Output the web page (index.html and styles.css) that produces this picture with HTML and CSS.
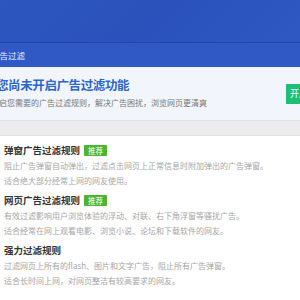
FILE: index.html
```html
<!DOCTYPE html>
<html lang="zh-CN">
<head>
  <meta charset="UTF-8" />
  <title>广告过滤</title>
  <link rel="stylesheet" href="styles.css">
</head>
<body>
  <!-- Header -->
  <div class="topbar"></div>
  <div class="tabbar">
    <span class="tab">广告过滤</span>
  </div>

  <!-- Status -->
  <div class="intro">
    <div class="intro-text">
      <h1>您尚未开启广告过滤功能</h1>
      <p>开启您需要的广告过滤规则，解决广告困扰，浏览网页更清爽</p>
    </div>
    <div class="open-btn">开启</div>
  </div>
  <div class="spacer"></div>

  <!-- Rules -->
  <div class="rules">
    <div class="rule">
      <h3>弹窗广告过滤规则 <span class="badge">推荐</span></h3>
      <p>阻止广告弹窗自动弹出，过滤点击网页上正常信息时附加弹出的广告弹窗。</p>
      <p>适合绝大部分经常上网的网友使用。</p>
    </div>
    <div class="rule">
      <h3>网页广告过滤规则 <span class="badge">推荐</span></h3>
      <p>有效过滤影响用户浏览体验的浮动、对联、右下角浮窗等骚扰广告。</p>
      <p>适合经常在网上观看电影、浏览小说、论坛和下载软件的网友。</p>
    </div>
    <div class="rule">
      <h3>强力过滤规则</h3>
      <p>过滤网页上所有的flash、图片和文字广告，阻止所有广告弹窗。</p>
      <p>适合长时间上网，对网页整洁有较高要求的网友。</p>
    </div>
  </div>
</body>
</html>
```

FILE: styles.css
```css
* {
  margin: 0;
  padding: 0;
  box-sizing: border-box;
}

body {
  width: 300px;
  height: 300px;
  overflow: hidden;
  background: #fff;
  font-family: "Noto Sans CJK SC", "Noto Sans", sans-serif;
}

/* Header */
.topbar {
  height: 43px;
  background: linear-gradient(135deg, #2e56bf 0%, #2b52bb 50%, #2f58c2 100%);
  border-bottom: 1px solid #2545a3;
}

.tabbar {
  height: 24px;
  background: #3059c5;
  display: flex;
  align-items: center;
}

.tab {
  margin-left: -9px;
  color: #e8eefc;
  font-size: 8.5px;
}

/* Status */
.intro {
  height: 54px;
  background: #f2f5fb;
  border-bottom: 1px solid #dfe2e8;
  display: flex;
  justify-content: space-between;
  align-items: flex-start;
}

.intro-text {
  padding-top: 10px;
}

.intro h1 {
  margin-left: -4px;
  color: #2a66cc;
  font-size: 12.5px;
  line-height: 16px;
  font-weight: bold;
  letter-spacing: -0.4px;
}

.intro p {
  margin-top: 4px;
  margin-left: -9px;
  color: #777;
  font-size: 8px;
  line-height: 12px;
}

.open-btn {
  margin-top: 17px;
  width: 28px;
  height: 20px;
  margin-right: -14px;
  background: #1dbf74;
  color: #fff;
  font-size: 9px;
  line-height: 20px;
  padding-left: 4px;
  flex-shrink: 0;
}

.spacer {
  height: 15px;
  background: #ececec;
  border-bottom: 1px solid #e2e2e2;
}

/* Rules */
.rules {
  padding: 5px 0 0 4px;
}

.rule {
  height: 50px;
}

.rule h3 {
  display: flex;
  align-items: center;
  gap: 4px;
  color: #333;
  font-size: 9.5px;
  line-height: 18px;
  font-weight: bold;
}

.badge {
  background: #4cb52f;
  color: #fff;
  font-size: 7.5px;
  font-weight: normal;
  line-height: 11px;
  padding: 0 4px;
  border-radius: 1px;
}

.rule p {
  color: #a6a6a6;
  font-size: 8px;
  line-height: 14.5px;
}
```
